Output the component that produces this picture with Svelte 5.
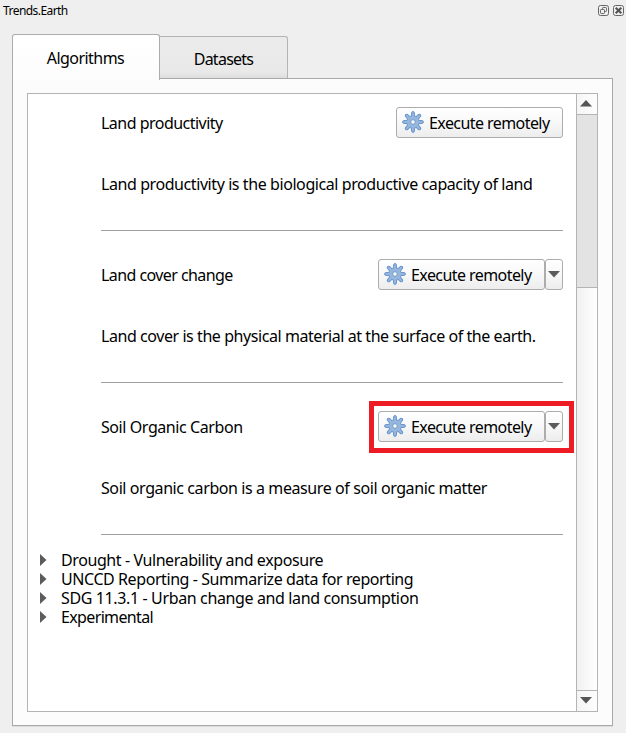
<script>
  const algorithms = [
    { name: 'Land productivity', ls: -0.52, text: 'Land productivity is the biological productive capacity of land', tls: -0.42, menu: false, marked: false },
    { name: 'Land cover change', ls: -0.57, text: 'Land cover is the physical material at the surface of the earth.', tls: -0.435, menu: true, marked: false },
    { name: 'Soil Organic Carbon', ls: -0.42, text: 'Soil organic carbon is a measure of soil organic matter', tls: -0.41, menu: true, marked: true }
  ];
  const groups = [
    { label: 'Drought - Vulnerability and exposure', ls: -0.41 },
    { label: 'UNCCD Reporting - Summarize data for reporting', ls: -0.42 },
    { label: 'SDG 11.3.1 - Urban change and land consumption', ls: -0.37 },
    { label: 'Experimental', ls: -0.64 }
  ];
  const teeth = [0, 45, 90, 135, 180, 225, 270, 315];
</script>

{#snippet gear()}
  <svg class="gear" width="22" height="22" viewBox="-11 -11 22 22">
    <g fill="#97b6dc" stroke="#6594cd" stroke-width="1">
      {#each teeth as a}
        <path transform="rotate({a})" d="M-1.6 -5 L-1.4 -9.2 Q-1.2 -10.4 0 -10.4 Q1.2 -10.4 1.4 -9.2 L1.6 -5" />
      {/each}
      <circle r="6.2" />
    </g>
    <circle r="5.7" fill="#97b6dc" />
    {#each teeth as a}
      <path transform="rotate({a})" d="M-1.1 -5 V-7.8 H1.1 V-5Z" fill="#97b6dc" />
    {/each}
    <circle r="2.3" fill="#fafafa" stroke="#6f9bd0" stroke-width="1" />
  </svg>
{/snippet}

<div class="dock">
  <header>
    <span>Trends.Earth</span>
    <svg width="11" height="11" viewBox="0 0 11 11" fill="none" stroke="#666">
      <rect x=".5" y=".5" width="10" height="10" rx="2" />
      <rect x="4.5" y="2.5" width="4" height="4" rx=".8" />
      <rect x="2.5" y="4.5" width="4" height="4" rx=".8" fill="#efefef" />
    </svg>
    <svg width="11" height="11" viewBox="0 0 11 11" fill="none" stroke="#666">
      <rect x=".5" y=".5" width="10" height="10" rx="2" />
      <path d="M2.7 2.7 L8.3 8.3 M8.3 2.7 L2.7 8.3" stroke="#555" stroke-width="2.1" />
    </svg>
  </header>
  <nav>
    <div class="tab active"><span class="t-alg">Algorithms</span></div>
    <div class="tab"><span class="t-data">Datasets</span></div>
  </nav>
  <main>
    <div class="view">
      <div class="content">
        {#each algorithms as item}
          <section>
            <div class="row">
              <span style="letter-spacing:{item.ls}px">{item.name}</span>
              <div class="action">
                <div class="btn">{@render gear()}<span>Execute remotely</span></div>
                {#if item.menu}
                  <div class="btn drop"><svg width="12" height="7" viewBox="0 0 12 7"><path d="M0 0H12L6 6.5Z" fill="#5c5c5c" /></svg></div>
                {/if}
                {#if item.marked}<div class="mark"></div>{/if}
              </div>
            </div>
            <p style="letter-spacing:{item.tls}px">{item.text}</p>
            <hr />
          </section>
        {/each}
        <ul>
          {#each groups as g}
            <li><svg width="7" height="12" viewBox="0 0 7 12"><path d="M0 0L6.5 6L0 12Z" fill="#5c5c5c" /></svg><span style="letter-spacing:{g.ls}px">{g.label}</span></li>
          {/each}
        </ul>
      </div>
      <div class="scroll">
        <div class="arrow up"><svg width="12" height="7" viewBox="0 0 12 7"><path d="M0 6.5H12L6 0Z" fill="#555" /></svg></div>
        <div class="thumb"></div>
        <div class="track"></div>
        <div class="arrow down"><svg width="12" height="7" viewBox="0 0 12 7"><path d="M0 0H12L6 6.5Z" fill="#555" /></svg></div>
      </div>
    </div>
  </main>
</div>

<style>
  :global(body) { background: #fff; }
  .dock {
    width: 626px; height: 733px; background: #efefef; box-sizing: border-box;
    font: 16px/20px "Noto Sans", sans-serif; color: #000; white-space: nowrap;
    display: flex; flex-direction: column; padding: 0 12px 7px;
  }
  .dock * { box-sizing: border-box; }
  svg { display: block; flex: none; }
  header { height: 34px; margin: 0 -10px 0 -9px; display: flex; align-items: flex-start; gap: 4px; padding-top: 5px; font-size: 12px; line-height: 12px; letter-spacing: -.56px; }
  header span { flex: 1; }
  nav { display: flex; align-items: flex-end; height: 44px; flex: none; }
  .tab { width: 128px; height: 42px; background: linear-gradient(#ebebeb, #e9e9e9 85%, #dedede); border: 1px solid #b4b4b4; border-left: 0; border-bottom: 0; border-radius: 0 3px 0 0; display: flex; justify-content: center; padding-top: 12px; }
  .tab.active { width: 148px; height: 46px; margin-bottom: -2px; padding: 13px 1px 0 0; background: linear-gradient(#fff, #fcfcfc); border: 1px solid #acacac; border-bottom: 0; border-radius: 3px 3px 0 0; position: relative; z-index: 1; }
  .t-alg { letter-spacing: -.56px; }
  .t-data { letter-spacing: -.75px; }
  main { width: 601px; height: 648px; border: 1px solid #a9a9a9; background: #fcfcfc; padding: 14px; box-shadow: 0 1px 0 #dcdcdc; }
  .view { width: 571px; height: 619px; border: 1px solid #b4b4b4; background: #fff; display: flex; }
  .content { flex: 1; }
  section { height: 152px; padding: 13px 13px 0 73px; }
  .row { height: 31px; display: flex; justify-content: space-between; align-items: center; }
  .action { display: flex; position: relative; }
  .btn { width: 167px; height: 31px; border: 1px solid #acacac; border-radius: 3px; background: linear-gradient(#fff, #f8f8f8 50%, #ededed); display: flex; align-items: center; padding-left: 5px; gap: 5px; letter-spacing: -.57px; }
  .gear { margin-top: -1px; }
  .drop { width: 18px; padding: 0; justify-content: center; }
  .mark { position: absolute; top: -10px; right: -11px; bottom: -11px; left: -9px; border: 5px solid #ed1c24; }
  p { margin: 36px 0 0; height: 20px; }
  hr { margin: 36px 0 0; border: 0; height: 1px; background: #a0a0a0; }
  ul { list-style: none; margin: 0; padding: 1px 0 0 12px; }
  li { height: 19px; line-height: 19px; display: flex; gap: 14px; align-items: center; }
  li svg { margin-top: -2px; }
  .scroll { width: 21px; border-left: 1px solid #b4b4b4; display: flex; flex-direction: column; background: linear-gradient(90deg, #f1f1f1, #fff); }
  .arrow { height: 21px; display: flex; align-items: center; justify-content: center; background: linear-gradient(90deg, #f5f5f5, #fdfdfd); }
  .arrow svg { margin: -2px 0 0 -2px; }
  .up { border-bottom: 1px solid #b4b4b4; }
  .down { height: 21px; border-top: 1px solid #b4b4b4; }
  .thumb { height: 173px; background: #e3e3e3; border-bottom: 1px solid #b4b4b4; }
  .track { flex: 1; }
</style>
